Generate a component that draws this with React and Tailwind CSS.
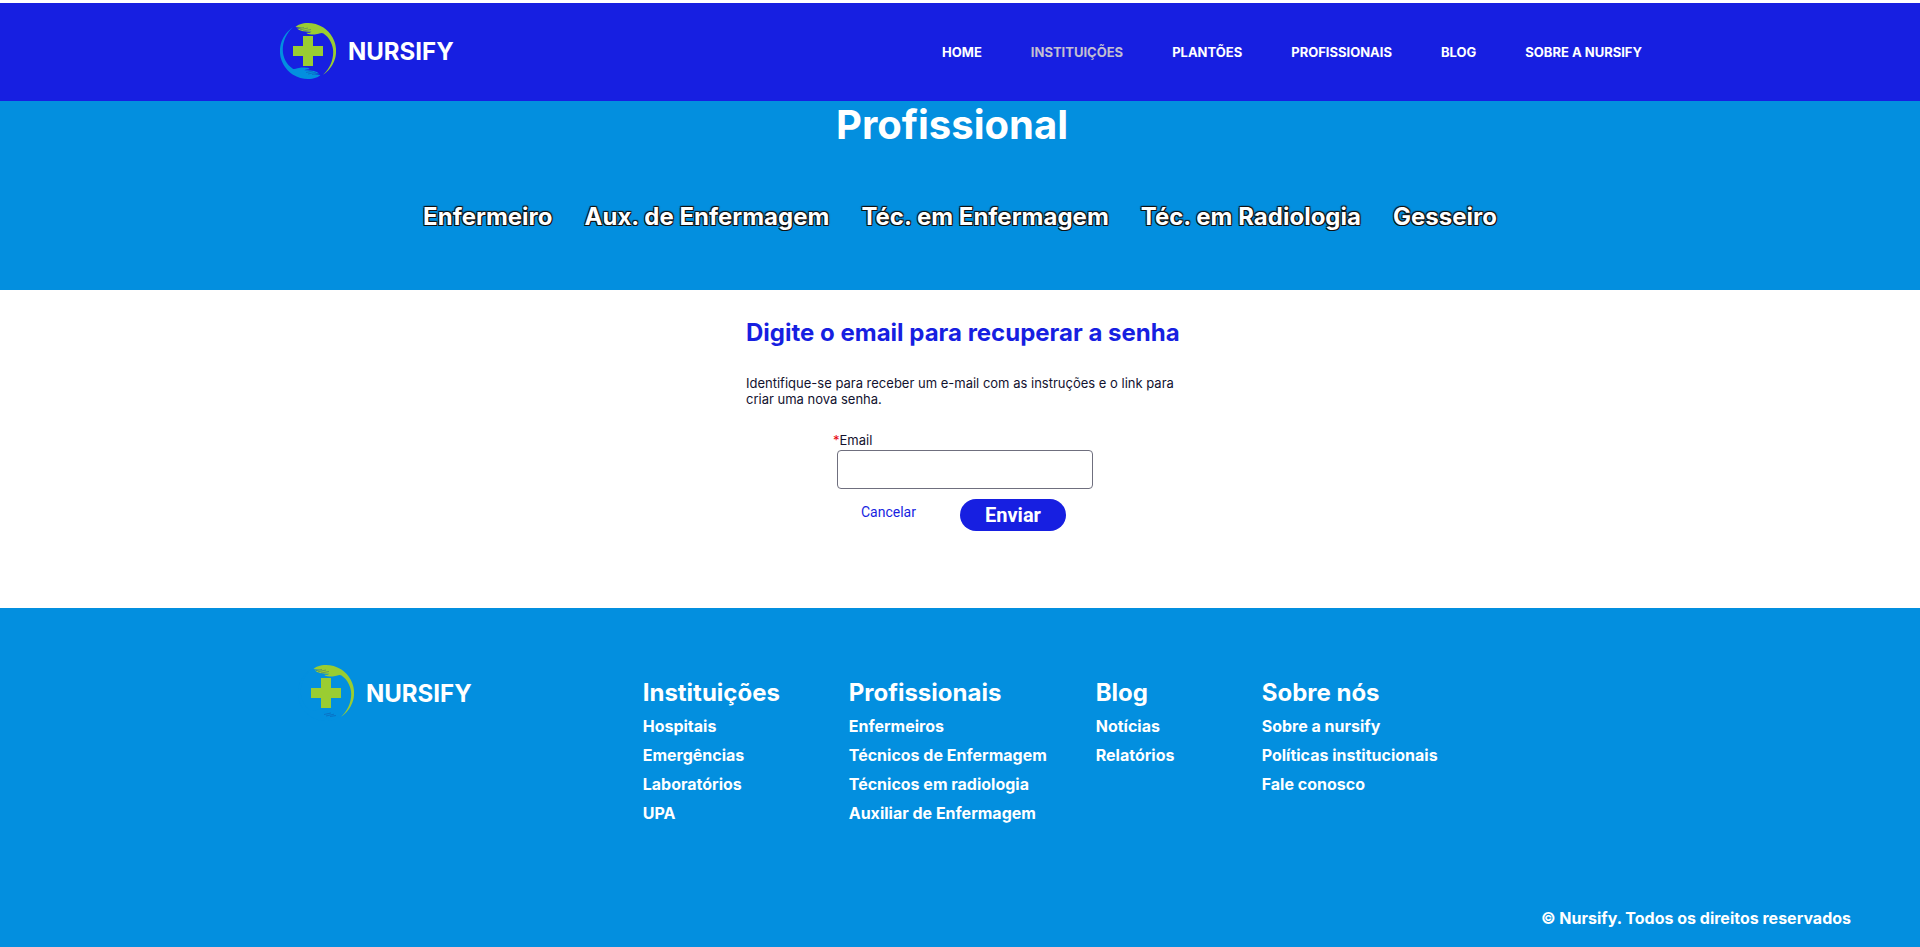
const navItems = ["HOME", "INSTITUIÇÕES", "PLANTÕES", "PROFISSIONAIS", "BLOG", "SOBRE A NURSIFY"];
const roles = ["Enfermeiro", "Aux. de Enfermagem", "Téc. em Enfermagem", "Téc. em Radiologia", "Gesseiro"];
const columns = [
  { title: "Instituições", width: "w-[158px]", links: ["Hospitais", "Emergências", "Laboratórios", "UPA"] },
  { title: "Profissionais", width: "w-[199px]", links: ["Enfermeiros", "Técnicos de Enfermagem", "Técnicos em radiologia", "Auxiliar de Enfermagem"] },
  { title: "Blog", width: "w-[118px]", links: ["Notícias", "Relatórios"] },
  { title: "Sobre nós", width: "w-[180px]", links: ["Sobre a nursify", "Políticas institucionais", "Fale conosco"] },
];

const hand =
  "M15.5 4 C17.5 2 22 0 28 0 C33 0 38.500 1.500 43 4.300 A28 28 0 0 1 43 51.700 C49.500 46 53.200 37.500 53.200 29 C53.200 22 49.500 14.500 43.500 10.500 C42 9.300 40.500 10.200 38.500 10.700 C36 11.300 34.500 11.700 31.500 11.400 C29 11.200 27 11.200 26.300 9.800 C28.500 9.800 30.500 9.600 31.500 8.700 C28 8.700 23.500 8.600 20.500 7.500 C18.500 6.900 17.800 6.300 17.200 5.600 L22 5 Z";

function Logo() {
  return (
    <a href="#" className="flex items-center gap-3 text-2xl font-bold text-white">
      <svg viewBox="0 0 56 56" className="size-14" aria-hidden="true">
        <g fill="#9acd32">
          <path d={hand} />
          <path d="M23 13h10v10h10v10H33v10H23V33H13V23h10z" />
        </g>
        <path fill="#038fdf" d={hand} transform="rotate(180 28 28)" />
        <g fill="none" stroke="#17409a" strokeWidth=".5" opacity=".7">
          <path d="M18 5.500 L24 4.500 M20 6.800 L28 5 M23 8 L31 6.500" />
          <path d="M38 50.500 L32 51.500 M36 49.200 L28 51 M33 48 L26 49.500" />
        </g>
      </svg>
      <span className="pt-[2px]">NURSIFY</span>
    </a>
  );
}

export default function App() {
  return (
    <div className="bg-white pt-[3px] font-['Inter',sans-serif] text-[#12122f]">
      <header className="flex h-[98px] items-center justify-between bg-[#171fe1] pr-[278px] pb-[2px] pl-[280px]">
        <Logo />
        <nav className="pt-1">
          <ul className="flex gap-[49px] text-[13px] font-bold text-white">
            {navItems.map((item, i) => (
              <li key={item}>
                <a href="#" className={i === 1 ? "text-[#c3bfd0]" : ""}>{item}</a>
              </li>
            ))}
          </ul>
        </nav>
      </header>

      <section className="flex h-[189px] flex-col items-center bg-[#038fdf] text-white">
        <h1 className="pr-4 text-[40px] leading-12 font-bold">Profissional</h1>
        <ul className="mt-[52px] flex gap-8 text-2xl font-bold [text-shadow:-1px_-1px_1px_#111,1px_-1px_1px_#111,-1px_1px_0_#111,1px_1px_0_#111]">
          {roles.map((role) => (
            <li key={role}><a href="#">{role}</a></li>
          ))}
        </ul>
      </section>

      <main className="flex h-[318px] justify-center pt-[27px] pl-2">
        <form className="w-[436px] text-[13px] leading-4" onSubmit={(e) => e.preventDefault()}>
          <h2 className="text-2xl leading-8 font-bold whitespace-nowrap text-[#171fe1]">Digite o email para recuperar a senha</h2>
          <p className="mt-[26px]">Identifique-se para receber um e-mail com as instruções e o link para criar uma nova senha.</p>
          <div className="mt-[25px] ml-[87px] w-[260px]">
            <label htmlFor="email" className="block"><span className="text-red-600">*</span>Email</label>
            <input id="email" type="email" className="mt-[2px] ml-1 block h-[39px] w-64 rounded-sm border border-[#6f6f7e] px-2" />
            <div className="mt-[10px] flex items-start justify-between pr-[27px] pl-7 font-[Roboto,sans-serif]">
              <a href="#" className="pt-[5px] text-sm leading-4 text-[#171fe1]">Cancelar</a>
              <button type="submit" className="h-8 w-[106px] rounded-full bg-[#171fe1] text-xl font-bold text-white">Enviar</button>
            </div>
          </div>
        </form>
      </main>

      <footer className="bg-[#038fdf] pt-[57px] text-base font-bold text-white">
        <div className="flex items-start pl-[298px]">
          <Logo />
          <div className="flex gap-12 pt-3 pl-[171px]">
            {columns.map((col) => (
              <div key={col.title} className={col.width}>
                <h3 className="text-2xl leading-8">{col.title}</h3>
                <ul className="pt-[3px]">
                  {col.links.map((link) => (
                    <li key={link} className="py-[2px] leading-[25px]"><a href="#">{link}</a></li>
                  ))}
                </ul>
              </div>
            ))}
          </div>
        </div>
        <p className="pt-[78px] pr-[69px] pb-[17px] text-right">© Nursify. Todos os direitos reservados</p>
      </footer>
    </div>
  );
}
